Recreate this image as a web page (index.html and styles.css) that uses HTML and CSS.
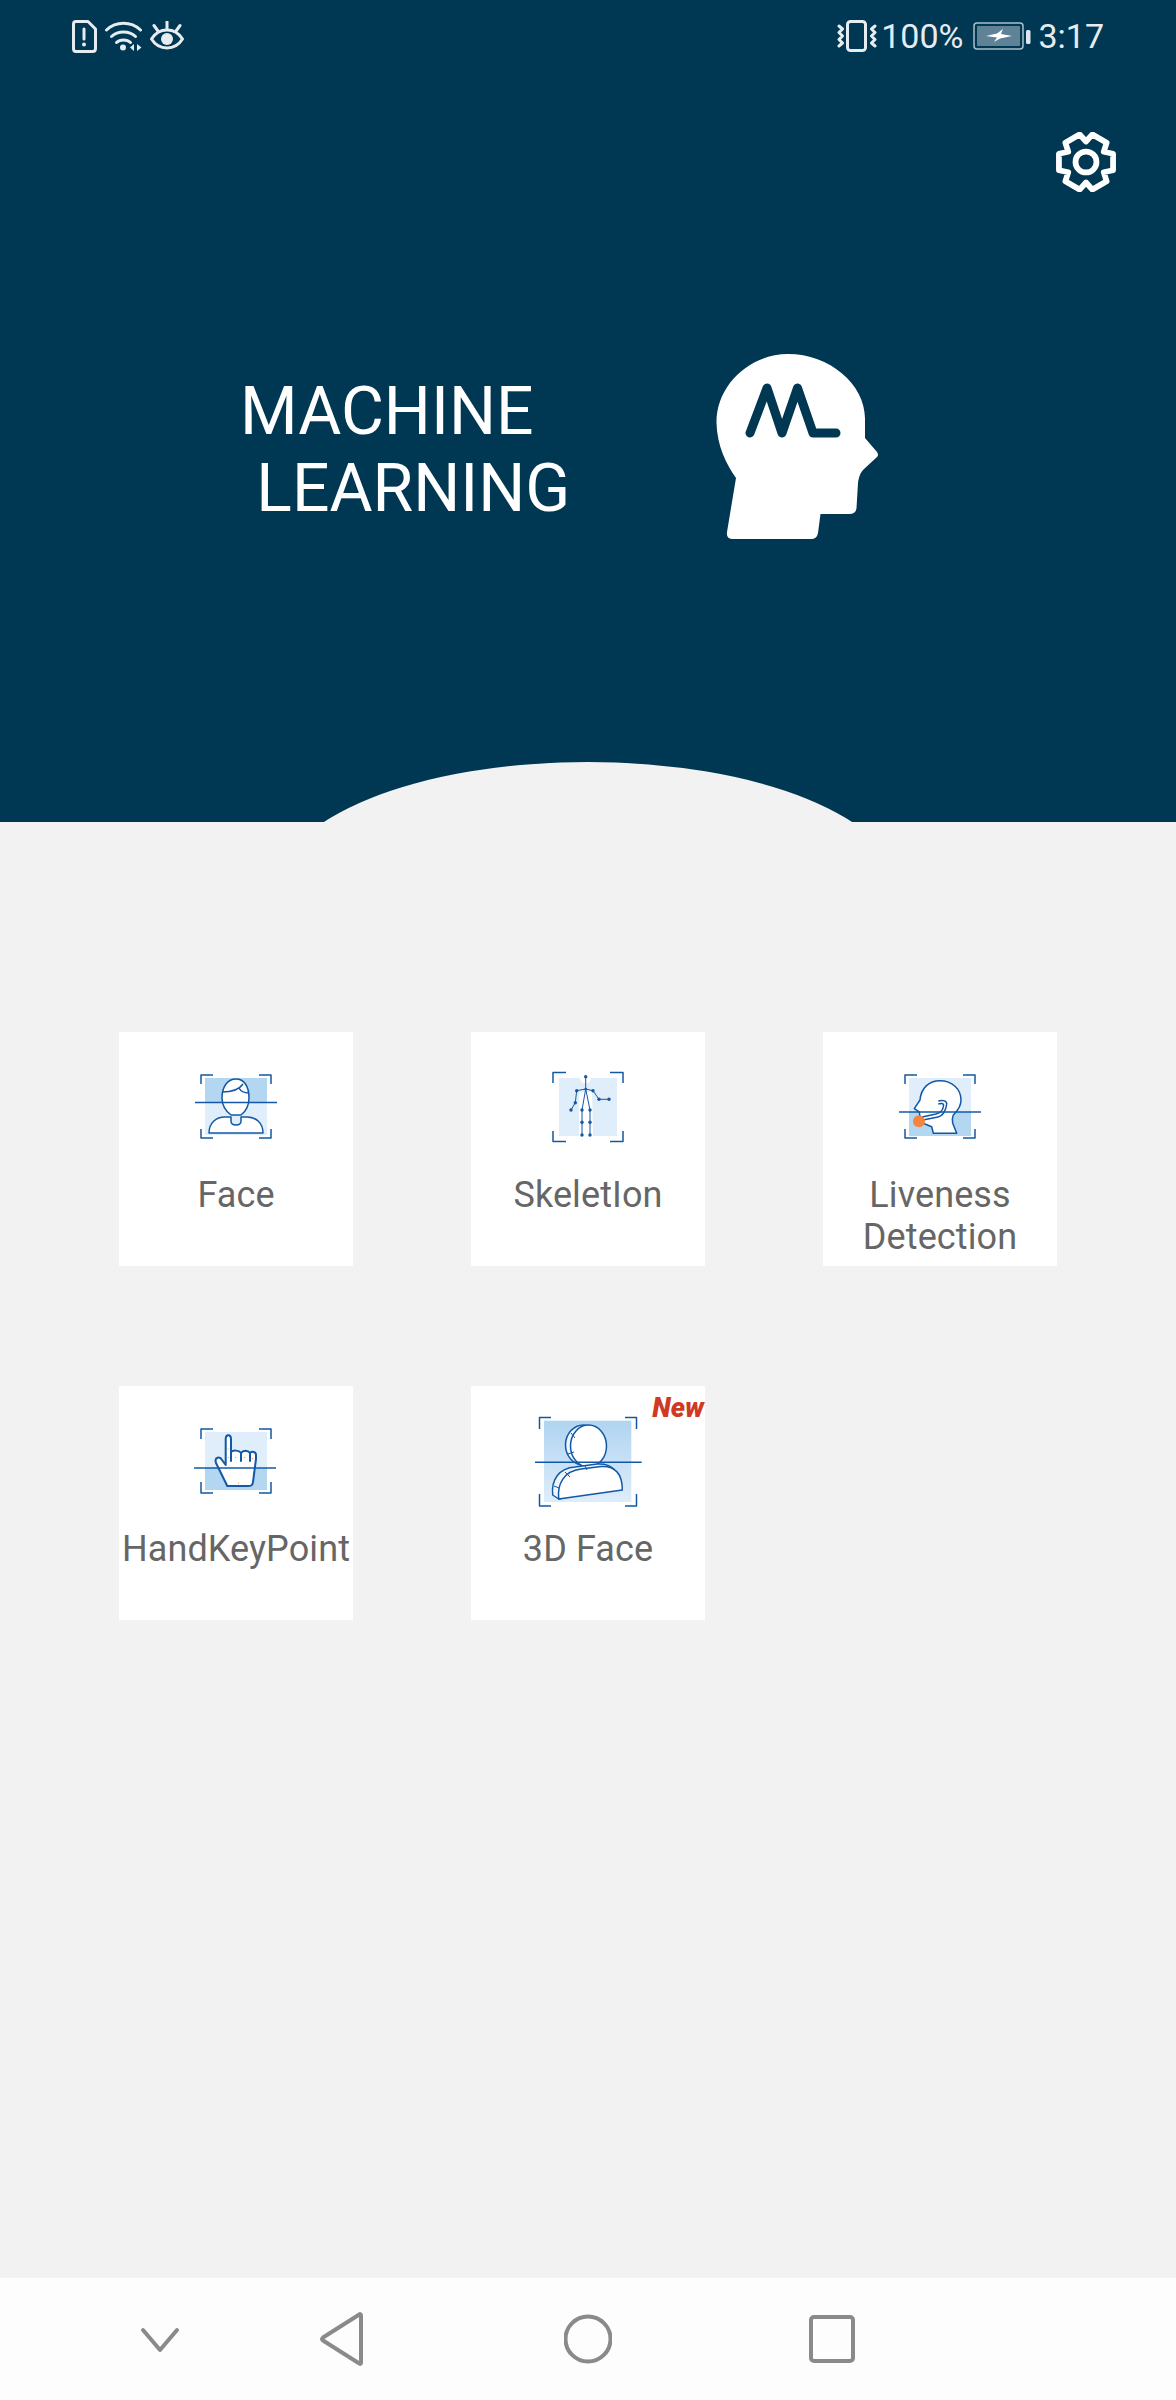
FILE: index.html
```html
<!DOCTYPE html>
<html lang="en">
<head>
    <meta charset="UTF-8">
    <meta name="viewport" content="width=device-width, initial-scale=1.0">
    <title>Machine Learning</title>
    <link rel="stylesheet" href="styles.css">
</head>
<body>

<header class="hero">
    <div class="status-bar">
        <div class="status-left">
            <svg class="st-sim" width="25" height="33" viewBox="0 0 25 33">
                <path class="st-line" d="M4 1.500H16L23.500 9V28.500Q23.500 31.500 20.500 31.500H4Q1.500 31.500 1.500 28.500V4Q1.500 1.500 4 1.500Z"/>
                <path class="st-line" d="M12 9V19"/>
                <circle class="st-fill" cx="12" cy="24.500" r="2"/>
            </svg>
            <svg class="st-wifi" width="37" height="30" viewBox="0 0 37 30">
                <path class="st-line" d="M1.500 9C11 0 26 0 35.500 9"/>
                <path class="st-line" d="M6.500 15.500C13 9.500 24 9.500 30.500 15.500"/>
                <path class="st-line" d="M11.500 21.500C15 18 22 18 25.500 21.500"/>
                <circle class="st-fill" cx="18" cy="26.500" r="3"/>
                <path class="st-fill" d="M29 23V30L25 26.500ZM32 23L36.500 26.500L32 30Z"/>
            </svg>
            <svg class="st-eye" width="34" height="30" viewBox="0 0 34 30">
                <path class="st-line" d="M1.500 18C9 6 25 6 32.500 18C25 30 9 30 1.500 18Z"/>
                <circle class="st-fill" cx="17" cy="18" r="6"/>
                <path class="st-line" d="M17 0V8M4 4.500L8 10M30 4.500L26 10"/>
            </svg>
        </div>
        <div class="status-right">
            <svg class="st-vibrate" width="40" height="32" viewBox="0 0 40 32">
                <rect class="st-line" x="10.500" y="1.500" width="18" height="29" rx="3"/>
                <path class="st-line" d="M2 6L5.500 9L2 12.500L5.500 16L2 19.500L5.500 23L2 26M38 6L34.500 9L38 12.500L34.500 16L38 19.500L34.500 23L38 26"/>
            </svg>
            <span class="st-text st-percent">100%</span>
            <svg class="st-battery" width="58" height="28" viewBox="0 0 58 28">
                <rect class="bat-shell" x="1" y="1" width="49" height="26" rx="3"/>
                <rect class="bat-level" x="4" y="4" width="43" height="20" rx="1"/>
                <path class="bat-bolt" d="M13 14L24 11.500L30 7L28 12L39 14L27 16.500L21 20L24 15.500Z"/>
                <rect class="bat-tip" x="53" y="8" width="4.500" height="14" rx="1.500"/>
            </svg>
            <span class="st-text">3:17</span>
        </div>
    </div>

    <div class="settings-row">
        <svg class="settings-icon" width="60" height="60" viewBox="1.400 1.400 57.200 57.200">
            <path d="M55.800 22.100L55.800 37.900L46.900 39.750L49.700 48.400L36.100 56.300L30 49.500L23.900 56.300L10.300 48.400L13.100 39.750L4.200 37.900L4.200 22.100L13.100 20.250L10.300 11.600L23.900 3.700L30 10.500L36.100 3.700L49.700 11.600L46.900 20.250Z"/>
            <circle cx="30" cy="30" r="10"/>
        </svg>
    </div>

    <div class="hero-main">
        <h1 class="hero-title">MACHINE<br>&nbsp;LEARNING</h1>
        <svg class="hero-head" width="164" height="186" viewBox="715 354 164 186">
            <path class="head-shape" d="M788 354C750 354 716 385 716.500 423C717 445 726 464 736 478L727 532Q726 539 733 539H811Q817 539 818 533L820.500 514H849Q856 514 856.500 508L858 483C859 477 860 473 864 469L877 457Q879 455 877 452L865 438L865 420C866 385 830 354 788 354Z"/>
            <path class="head-ml" d="M750 433L767 388L782 433L797.500 388L813 433H836"/>
        </svg>
    </div>

    <div class="hero-curve"></div>
</header>

<main class="menu">
    <div class="menu-grid">
        <div class="card">
            <svg class="card-icon" width="120" height="120" viewBox="57 21 120 120">
                <rect class="bg-dark" x="86" y="46" width="62" height="25"/>
                <rect class="bg-light" x="86" y="71" width="62" height="32"/>
                <path class="ln fill-w" d="M103 66C103 54 109 47 117 47C125 47 130 54 130 66C130 74 126 80 122 83H112C108 80 103 74 103 66Z"/>
                <path class="ln" d="M103 60C112 60 120 58 124 52M120 56C122 60 126 61 130 61"/>
                <path class="ln fill-w" d="M90 101C90 91 97 85 106 85H112V89C112 92 114 93 117 93C120 93 122 92 122 89V85H128C137 85 144 91 144 101Z"/>
                <path class="ln" d="M82 52V43H94M140 43H152V52M82 97V106H94M140 106H152V97"/>
                <path class="ln" d="M76 70.500H158"/>
            </svg>
            <div class="card-label">Face</div>
        </div>

        <div class="card">
            <svg class="card-icon" width="120" height="120" viewBox="57 21 120 120">
                <rect class="bg-light" x="88" y="46" width="58" height="58"/>
                <circle class="fill-w" cx="114.500" cy="46" r="5.500"/>
                <path class="fill-w" d="M108 60H121L122 104H108Z"/>
                <path class="ln-thin" d="M114.700 45V57M105.700 58.700L114.700 57L122 58.700L128 67.300H138M105.700 58.700L104.300 70.700L100 78M114.700 57L111 78V103M114.700 57L119 78V103"/>
                <g class="dots">
                    <circle cx="114.700" cy="44.700" r="1.700"/>
                    <circle cx="114.700" cy="57" r="1.300"/>
                    <circle cx="105.700" cy="58.700" r="1.700"/>
                    <circle cx="122" cy="58.700" r="1.700"/>
                    <circle cx="104.300" cy="70.700" r="1.700"/>
                    <circle cx="100" cy="78" r="1.700"/>
                    <circle cx="128" cy="67.300" r="1.700"/>
                    <circle cx="138" cy="67.300" r="1.700"/>
                    <circle cx="111" cy="78" r="1.700"/>
                    <circle cx="119" cy="78" r="1.700"/>
                    <circle cx="111" cy="90.300" r="1.700"/>
                    <circle cx="119" cy="90.300" r="1.700"/>
                    <circle cx="111" cy="103" r="1.700"/>
                    <circle cx="119" cy="103" r="1.700"/>
                </g>
                <path class="ln" d="M82 51V40.500H95M139 40.500H152V51M82 99V109.500H95M139 109.500H152V99"/>
            </svg>
            <div class="card-label">SkeletIon</div>
        </div>

        <div class="card">
            <svg class="card-icon" width="120" height="120" viewBox="57 21 120 120">
                <rect class="bg-light" x="86" y="46" width="62" height="34"/>
                <rect class="bg-dark" x="86" y="80" width="62" height="24"/>
                <path class="ln fill-w" d="M97 68C98 56 106 48.700 117 48.700C129 48.700 138 57 138 68C138 76 133 80 130.300 83C129 86 129 88 129.700 91.300L133.700 101.300H110.300L108.700 94.700L102 92C99 92 97 88 96.300 80L91.300 76.700Z"/>
                <path class="ln" d="M115.300 69C118 68 124 68 123.700 72C123 78 120 84 115 85L100 88M115.300 72C118 71 121 71 120.500 74C120 78 117 81 113 82L99 85"/>
                <circle class="dot-orange" cx="96" cy="89.300" r="6"/>
                <path class="ln" d="M82 52V43H94M140 43H152V52M82 97V106H94M140 106H152V97"/>
                <path class="ln" d="M76 80H158"/>
            </svg>
            <div class="card-label">Liveness Detection</div>
        </div>

        <div class="card">
            <svg class="card-icon" width="120" height="120" viewBox="57 21 120 120">
                <rect class="bg-light" x="86" y="46" width="62" height="36"/>
                <rect class="bg-dark" x="86" y="82" width="62" height="22"/>
                <path class="ln-hand fill-w" d="M106.700 53C106.700 48 112 48 112 53V66C114 64 120 64 122 67C124 64 129 64 131 67C133 65 137 65.500 137 69V73L134 96C133.700 99 132 100 130 100H108.300L97 77C95 71 101 70 103 74L106.700 79Z"/>
                <path class="ln-hand" d="M122 67V75M131 67V75M112 66V75"/>
                <g class="dots-orange">
                    <circle cx="109.300" cy="63" r=".6"/>
                    <circle cx="109.300" cy="71.500" r=".6"/>
                    <circle cx="116.500" cy="71.500" r=".6"/>
                    <circle cx="125.500" cy="71.500" r=".6"/>
                    <circle cx="133.500" cy="72.500" r=".6"/>
                    <circle cx="119.500" cy="97" r=".6"/>
                </g>
                <path class="ln" d="M82 53V43H94M140 43H152V53M82 96V107H94M140 107H152V96"/>
                <path class="ln" d="M75 82H157"/>
            </svg>
            <div class="card-label">HandKeyPoint</div>
        </div>

        <div class="card">
            <span class="badge-new">New</span>
            <svg class="card-icon" width="120" height="120" viewBox="57 21 120 120">
                <defs>
                    <linearGradient id="faceBg" x1="0" y1="0" x2="0" y2="1">
                        <stop offset="0" stop-color="#b0d4f0"/>
                        <stop offset="1" stop-color="#deedfa"/>
                    </linearGradient>
                </defs>
                <rect fill="url(#faceBg)" x="73" y="34.700" width="87.300" height="81.300"/>
                <ellipse class="ln fill-lt" cx="112.500" cy="59" rx="18" ry="20"/>
                <ellipse class="ln fill-w" cx="117.500" cy="60" rx="18" ry="21"/>
                <path class="ln fill-lt" d="M81.700 109C80 94 88 82 104 81L126 78C142 77 148 86 148 100L87.700 113Z"/>
                <path class="ln fill-w" d="M87.700 113C86 98 93 85 110 83L130 80.500C144 79.500 151.500 88 151.300 104Z"/>
                <path class="ln-thin" d="M97 68L103 66M100 47L104 52M94 86L99 91M83 100L88 102M114 80L116 84"/>
                <path class="ln" d="M68.500 43V31.500H80M154 31.500H165.500V43M68.500 108V120H80M154 120H165.500V108"/>
                <path class="ln" d="M64 76.300H170.700"/>
            </svg>
            <div class="card-label">3D Face</div>
        </div>
    </div>
</main>

<nav class="nav-bar">
    <svg class="nav-icon" width="48" height="60" viewBox="0 0 48 60">
        <path d="M7 21L24 41L41 21"/>
    </svg>
    <svg class="nav-icon" width="48" height="60" viewBox="0 0 48 60">
        <path d="M44 6.500V53.500Q44 56 41.500 54L6 31.500Q4 30 6 28.500L41.500 6Q44 4 44 6.500Z"/>
    </svg>
    <svg class="nav-icon" width="48" height="60" viewBox="0 0 48 60">
        <circle cx="24" cy="30" r="22.500"/>
    </svg>
    <svg class="nav-icon" width="48" height="60" viewBox="0 0 48 60">
        <rect x="3" y="8" width="42" height="44" rx="3"/>
    </svg>
</nav>

</body>
</html>
```

FILE: styles.css
```css
body {
    margin: 0;
    height: 2400px;
    display: flex;
    flex-direction: column;
    background: #f2f2f2;
    font-family: Roboto, "Liberation Sans", sans-serif;
}

.hero {
    position: relative;
    height: 822px;
    overflow: hidden;
    background: #003853;
    flex: none;
}

.status-bar {
    height: 72px;
    display: flex;
    justify-content: space-between;
    align-items: center;
    padding: 0 72px;
    color: #e6ecf0;
}

.status-left, .status-right {
    display: flex;
    align-items: center;
}

.status-left {
    gap: 8px;
}

.status-right {
    gap: 7px;
}

.st-text {
    font-size: 34px;
    font-weight: 400;
}

.st-percent {
    margin: 0 3px 0 -3px;
}

.st-line {
    fill: none;
    stroke: #e6ecf0;
    stroke-width: 3;
    stroke-linecap: round;
    stroke-linejoin: round;
}

.st-fill {
    fill: #e6ecf0;
}

.bat-shell {
    fill: none;
    stroke: #a9c0cc;
    stroke-width: 1.5;
}

.bat-level {
    fill: #5f8296;
}

.bat-bolt {
    fill: #ffffff;
}

.bat-tip {
    fill: #e0e7ec;
}

.settings-row {
    display: flex;
    justify-content: flex-end;
    margin-top: 60px;
    padding-right: 60px;
}

.settings-icon {
    fill: none;
    stroke: #ffffff;
    stroke-width: 5.5;
    stroke-linejoin: round;
}

.hero-main {
    display: flex;
    align-items: flex-start;
    margin-top: 162px;
    padding-left: 240px;
}

.hero-title {
    width: 475px;
    margin: 19px 0 0;
    font-size: 66px;
    font-weight: 400;
    line-height: 77px;
    color: #ffffff;
}

.head-shape {
    fill: #ffffff;
}

.head-ml {
    fill: none;
    stroke: #003853;
    stroke-width: 9;
    stroke-linecap: round;
    stroke-linejoin: round;
}

.hero-curve {
    position: absolute;
    left: 278px;
    top: 762px;
    width: 620px;
    height: 252px;
    border-radius: 50%;
    background: #f2f2f2;
}

.menu {
    flex: 1;
    padding: 210px 0 0 119px;
}

.menu-grid {
    display: grid;
    grid-template-columns: repeat(3, 234px);
    grid-auto-rows: 234px;
    column-gap: 118px;
    row-gap: 120px;
}

.card {
    position: relative;
    background: #ffffff;
    display: flex;
    flex-direction: column;
    align-items: center;
    padding-top: 21px;
    box-sizing: border-box;
}

.card-icon {
    flex: none;
    margin-bottom: 1px;
}

.card-label {
    font-size: 36px;
    line-height: 42px;
    letter-spacing: 0.1px;
    color: #666666;
    text-align: center;
}

.badge-new {
    position: absolute;
    top: 10px;
    right: 1px;
    font-size: 27px;
    line-height: 24px;
    font-weight: 900;
    font-style: italic;
    color: #cf3a25;
}

.bg-dark {
    fill: #b3d6f1;
}

.bg-light {
    fill: #dfeefa;
}

.fill-w {
    fill: #ffffff;
}

.fill-lt {
    fill: #eef6fc;
}

.ln, .ln-thin, .ln-hand {
    stroke: #1258a6;
    stroke-linejoin: round;
}

.ln {
    stroke-width: 1.5;
}

.ln-thin {
    stroke-width: 1;
}

.ln-hand {
    stroke-width: 2;
    stroke-linecap: round;
}

.ln:not(.fill-w):not(.fill-lt), .ln-thin, .ln-hand:not(.fill-w) {
    fill: none;
}

.dots circle {
    fill: #1258a6;
}

.dot-orange {
    fill: #f4843f;
}

.dots-orange circle {
    fill: #f4843f;
}

.nav-bar {
    flex: none;
    height: 122px;
    background: #fdfdfd;
    display: grid;
    grid-template-columns: 181px 247px 244px 48px;
    align-items: center;
    padding-left: 136px;
}

.nav-icon {
    fill: none;
    stroke: #8a8a8a;
    stroke-width: 4;
    stroke-linecap: round;
    stroke-linejoin: round;
}
```
